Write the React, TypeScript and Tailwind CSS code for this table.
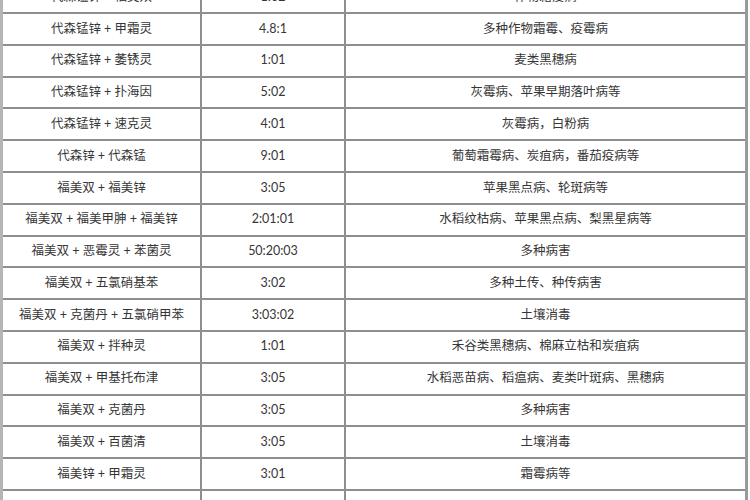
const ROWS: [string, string, string][] = [
  ["代森锰锌 + 福美双", "1:02", "作物霜疫病"],
  ["代森锰锌 + 甲霜灵", "4.8:1", "多种作物霜霉、疫霉病"],
  ["代森锰锌 + 萎锈灵", "1:01", "麦类黑穗病"],
  ["代森锰锌 + 扑海因", "5:02", "灰霉病、苹果早期落叶病等"],
  ["代森锰锌 + 速克灵", "4:01", "灰霉病，白粉病"],
  ["代森锌 + 代森锰", "9:01", "葡萄霜霉病、炭疽病，番茄疫病等"],
  ["福美双 + 福美锌", "3:05", "苹果黑点病、轮斑病等"],
  ["福美双 + 福美甲胂 + 福美锌", "2:01:01", "水稻纹枯病、苹果黑点病、梨黑星病等"],
  ["福美双 + 恶霉灵 + 苯菌灵", "50:20:03", "多种病害"],
  ["福美双 + 五氯硝基苯", "3:02", "多种土传、种传病害"],
  ["福美双 + 克菌丹 + 五氯硝甲苯", "3:03:02", "土壤消毒"],
  ["福美双 + 拌种灵", "1:01", "禾谷类黑穗病、棉麻立枯和炭疽病"],
  ["福美双 + 甲基托布津", "3:05", "水稻恶苗病、稻瘟病、麦类叶斑病、黑穗病"],
  ["福美双 + 克菌丹", "3:05", "多种病害"],
  ["福美双 + 百菌清", "3:05", "土壤消毒"],
  ["福美锌 + 甲霜灵", "3:01", "霜霉病等"],
  ["", "", ""],
];

export default function App() {
  return (
    <div
      className="w-[750px] h-[500px] overflow-hidden bg-white text-[12.5px] text-[#363636]"
      style={{ fontFamily: '"Lato", "Noto Sans CJK SC", sans-serif' }}
    >
      <div className="-mt-[17.8px] w-[748px] border-l-[3px] border-r-[3px] border-l-[#b5b5b5] border-r-[#9a9a9a]">
        {ROWS.map((r, i) => (
          <div key={i} className="flex h-[31.8px] border-b-2 border-[#8e8e8e]">
            <div className="w-[199px] shrink-0 flex items-center justify-center border-r-2 border-[#8e8e8e]">
              {r[0]}
            </div>
            <div className="w-[144px] shrink-0 flex items-center justify-center border-r-2 border-[#8e8e8e]">
              {r[1]}
            </div>
            <div className="flex-1 flex items-center justify-center">{r[2]}</div>
          </div>
        ))}
      </div>
    </div>
  );
}
